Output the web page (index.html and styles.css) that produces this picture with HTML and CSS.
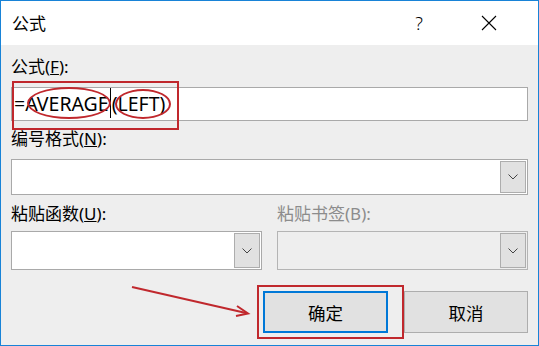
FILE: index.html
```html
<!DOCTYPE html>
<html lang="zh-CN">
<head>
    <meta charset="UTF-8">
    <title>公式</title>
    <link rel="stylesheet" href="styles.css">
</head>
<body>
    <div class="window">
        <div class="titlebar">
            <span class="title">公式</span>
            <span class="help">?</span>
            <span class="close">
                <svg width="16" height="16" viewBox="0 0 16 16"><path d="M1 1L15 15M15 1L1 15" stroke="#000" stroke-width="1.1" fill="none"/></svg>
            </span>
        </div>

        <div class="content">
            <label class="label">公式(<u>F</u>):</label>
            <div class="field formula">=AVERAGE<span class="caret"></span>(LEFT)</div>

            <label class="label">编号格式(<u>N</u>):</label>
            <div class="combo combo-wide">
                <span class="combo-text"></span>
                <span class="drop"><svg width="10" height="6" viewBox="0 0 10 6"><path d="M0.5 0.5L5 5L9.5 0.5" stroke="#444" stroke-width="1" fill="none"/></svg></span>
            </div>

            <div class="columns">
                <div class="col">
                    <label class="label">粘贴函数(<u>U</u>):</label>
                    <div class="combo combo-tall">
                        <span class="combo-text"></span>
                        <span class="drop"><svg width="10" height="6" viewBox="0 0 10 6"><path d="M0.5 0.5L5 5L9.5 0.5" stroke="#444" stroke-width="1" fill="none"/></svg></span>
                    </div>
                </div>
                <div class="col">
                    <label class="label disabled">粘贴书签(B):</label>
                    <div class="combo combo-tall combo-disabled">
                        <span class="combo-text"></span>
                        <span class="drop"><svg width="10" height="6" viewBox="0 0 10 6"><path d="M0.5 0.5L5 5L9.5 0.5" stroke="#444" stroke-width="1" fill="none"/></svg></span>
                    </div>
                </div>
            </div>

            <div class="buttons">
                <button class="btn btn-default">确定</button>
                <button class="btn">取消</button>
            </div>
        </div>

        <!-- red annotation marks drawn over the dialog -->
        <div class="mark mark-formula"></div>
        <div class="oval oval-avg"></div>
        <div class="oval oval-left"></div>
        <div class="mark mark-ok"></div>
        <svg class="arrow" width="130" height="40" viewBox="0 0 130 40">
            <path d="M1 1L115 27" stroke="#c0282d" stroke-width="2" fill="none"/>
            <path d="M106 20L117 27.5L105 30" stroke="#c0282d" stroke-width="2" fill="none"/>
        </svg>
    </div>
</body>
</html>
```

FILE: styles.css
```css
body {
    margin: 0;
    font-family: "Noto Sans", "Noto Sans CJK SC", sans-serif;
    color: #000;
}

.window {
    position: relative;
    box-sizing: border-box;
    width: 539px;
    height: 346px;
    border: 1px solid #1883d7;
    background-color: #eeeeee;
    overflow: hidden;
}

.titlebar {
    display: flex;
    align-items: center;
    height: 44px;
    background-color: #ffffff;
    padding-left: 11px;
}

.title {
    flex: 1;
    font-size: 17px;
    margin-top: -2px;
}

.help {
    font-size: 18px;
    font-weight: 300;
    margin-right: 58px;
    margin-top: -1px;
}

.close {
    display: flex;
    margin-right: 41px;
    margin-top: -1px;
}

.content {
    display: flex;
    flex-direction: column;
    padding: 11px 10px 0 10px;
}

.label {
    display: block;
    font-size: 17px;
    line-height: 22px;
    height: 22px;
}

.label.disabled {
    color: #8c8c8c;
}

.field {
    box-sizing: border-box;
    height: 34px;
    margin-top: 9px;
    margin-bottom: 7px;
    background-color: #ffffff;
    border: 1px solid #a9a9a9;
    padding-left: 2px;
    font-size: 19.5px;
    line-height: 31px;
    white-space: nowrap;
}

.caret {
    display: inline-block;
    width: 1px;
    height: 30px;
    margin: 0 1px;
    background-color: #000;
    vertical-align: -7px;
}

.combo {
    display: flex;
    box-sizing: border-box;
    background-color: #ffffff;
    border: 1px solid #a9a9a9;
    padding: 1px;
}

.combo-wide {
    height: 36px;
    margin-top: 9px;
}

.combo-tall {
    height: 39px;
    margin-top: 6px;
}

.combo-disabled {
    background-color: #eeeeee;
    border-color: #b4b4b4;
}

.combo-text {
    flex: 1;
}

.drop {
    box-sizing: border-box;
    width: 26px;
    display: flex;
    align-items: center;
    justify-content: center;
    background-color: #e1e1e1;
    border: 1px solid #adadad;
}

.columns {
    display: grid;
    grid-template-columns: 251px 251px;
    column-gap: 15px;
    margin-top: 8px;
}

.buttons {
    display: flex;
    justify-content: flex-end;
    gap: 16px;
    margin-top: 21px;
}

.btn {
    box-sizing: border-box;
    width: 124px;
    height: 42px;
    background-color: #e1e1e1;
    border: 1px solid #adadad;
    font-family: "Noto Sans", "Noto Sans CJK SC", sans-serif;
    font-size: 17.5px;
    color: #000;
    padding: 0;
}

.btn-default {
    width: 125px;
    border: 2px solid #0078d7;
}

.mark {
    position: absolute;
    border: 2px solid #c0282d;
    box-sizing: border-box;
}

.mark-formula {
    left: 11px;
    top: 80px;
    width: 167px;
    height: 49px;
}

.mark-ok {
    left: 256px;
    top: 284px;
    width: 147px;
    height: 54px;
}

.oval {
    position: absolute;
    box-sizing: border-box;
    border: 2px solid #c0282d;
    border-radius: 50%;
}

.oval-avg {
    left: 26px;
    top: 86px;
    width: 84px;
    height: 32px;
}

.oval-left {
    left: 114px;
    top: 88px;
    width: 56px;
    height: 30px;
}

.arrow {
    position: absolute;
    left: 130px;
    top: 285px;
}
```
